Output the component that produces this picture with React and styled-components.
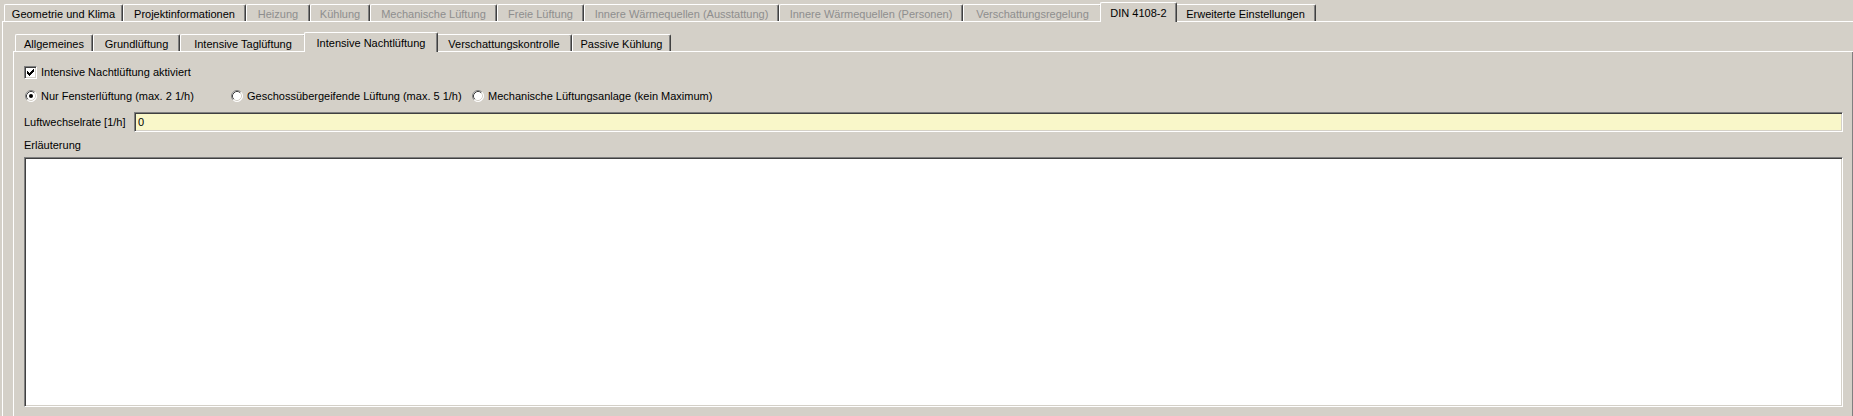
import React from "react";
import styled, { createGlobalStyle, css } from "styled-components";

const GlobalStyle = createGlobalStyle`
  html, body {
    margin: 0;
    padding: 0;
    background: #d4d0c8;
    overflow: hidden;
  }
  body {
    font-family: "Liberation Sans", Arial, sans-serif;
    font-size: 11px;
    color: #000;
  }
`;

const Window = styled.div`
  width: 1853px;
  height: 416px;
  overflow: hidden;
  background: #d4d0c8;
`;

const TabControl = styled.div`
  box-sizing: border-box;
  display: flex;
  flex-direction: column;
  width: ${(p) => p.$width}px;
  margin-left: ${(p) => p.$offset}px;
`;

const TabStrip = styled.div`
  display: flex;
  align-items: flex-end;
  height: ${(p) => p.$height}px;
  padding-left: 2px;
`;

const Tab = styled.div`
  box-sizing: border-box;
  flex: none;
  width: ${(p) => p.$w}px;
  height: 17px;
  padding-top: 2px;
  display: flex;
  align-items: center;
  justify-content: center;
  white-space: nowrap;
  background: #d4d0c8;
  border-top: 1px solid #fff;
  border-left: 1px solid #fff;
  border-right: 1px solid #404040;
  border-radius: 2px 2px 0 0;
  box-shadow: inset -1px 0 0 #808080;
  color: ${(p) => (p.$disabled ? "#8e8e8e" : "#000")};

  ${(p) =>
    p.$active &&
    css`
      width: ${p.$w + 4}px;
      height: 20px;
      padding-top: 1px;
      margin: 0 -2px -1px;
      position: relative;
      z-index: 1;
    `}
`;

const Panel = styled.div`
  box-sizing: border-box;
  display: flex;
  flex-direction: column;
  border-top: 1px solid #fff;
  border-left: 1px solid #fff;
  border-right: 1px solid #404040;
  box-shadow: inset -1px 0 0 #808080;
  padding: ${(p) => p.$pad};
  flex: 1;
`;

const Row = styled.div`
  display: flex;
  align-items: center;
  height: ${(p) => p.$h}px;
  margin-top: ${(p) => p.$mt || 0}px;
`;

const CheckLabel = styled.label`
  display: flex;
  align-items: center;
  gap: 4px;
  white-space: nowrap;
`;

const CheckBoxFrame = styled.span`
  box-sizing: border-box;
  width: 13px;
  height: 13px;
  display: flex;
  align-items: center;
  justify-content: center;
  background: #fff;
  border: 1px solid;
  border-color: #808080 #fff #fff #808080;
  box-shadow: inset 1px 1px 0 #404040, inset -1px -1px 0 #d4d0c8;
`;

const RadioOption = styled.label`
  box-sizing: border-box;
  display: flex;
  align-items: center;
  gap: 4px;
  white-space: nowrap;
  width: ${(p) => (p.$w ? `${p.$w}px` : "auto")};
  padding-left: 1px;
`;

const FieldLabel = styled.span`
  white-space: nowrap;
  width: 110px;
  flex: none;
`;

const sunken = css`
  box-sizing: border-box;
  border: 1px solid;
  border-color: #808080 #fff #fff #808080;
  box-shadow: inset 1px 1px 0 #404040, inset -1px -1px 0 #d4d0c8;
`;

const TextInput = styled.div`
  ${sunken}
  flex: 1;
  height: 20px;
  margin-right: 10px;
  background: #f9f7c9;
  display: flex;
  align-items: center;
  padding-left: 3px;
`;

const NoteArea = styled.div`
  ${sunken}
  height: 250px;
  margin-right: 10px;
  background: #fff;
`;

const CheckMark = () => (
  <svg width="7" height="7" viewBox="0 0 7 7" shapeRendering="crispEdges">
    <path
      fill="#000"
      d="M6 0h1v1h-1zM5 1h2v1h-2zM0 2h1v1h-1zM4 2h3v1h-3zM0 3h2v1h-2zM3 3h3v1h-3zM0 4h5v1h-5zM1 5h3v1h-3zM2 6h1v1h-1z"
    />
  </svg>
);

const RadioDot = ({ checked }) => (
  <svg width="12" height="12" viewBox="0 0 12 12">
    <circle cx="6" cy="6" r="5.5" fill="#fff" />
    <path d="M2.11 9.89A5.5 5.5 0 0 1 9.89 2.11" fill="none" stroke="#808080" />
    <path d="M9.89 2.11A5.5 5.5 0 0 1 2.11 9.89" fill="none" stroke="#fff" />
    <path d="M2.82 9.18A4.5 4.5 0 0 1 9.18 2.82" fill="none" stroke="#404040" />
    <path d="M9.18 2.82A4.5 4.5 0 0 1 2.82 9.18" fill="none" stroke="#d4d0c8" />
    {checked && <circle cx="6" cy="6" r="2" fill="#000" />}
  </svg>
);

const mainTabs = [
  { label: "Geometrie und Klima", w: 119 },
  { label: "Projektinformationen", w: 123 },
  { label: "Heizung", w: 64, disabled: true },
  { label: "Kühlung", w: 60, disabled: true },
  { label: "Mechanische Lüftung", w: 127, disabled: true },
  { label: "Freie Lüftung", w: 87, disabled: true },
  { label: "Innere Wärmequellen (Ausstattung)", w: 195, disabled: true },
  { label: "Innere Wärmequellen (Personen)", w: 184, disabled: true },
  { label: "Verschattungsregelung", w: 139, disabled: true },
  { label: "DIN 4108-2", w: 73, active: true },
  { label: "Erweiterte Einstellungen", w: 141 },
];

const subTabs = [
  { label: "Allgemeines", w: 78 },
  { label: "Grundlüftung", w: 87 },
  { label: "Intensive Taglüftung", w: 126 },
  { label: "Intensive Nachtlüftung", w: 130, active: true },
  { label: "Verschattungskontrolle", w: 136 },
  { label: "Passive Kühlung", w: 99 },
];

const renderTabs = (tabs) =>
  tabs.map((t) => (
    <Tab key={t.label} $w={t.w} $active={t.active} $disabled={t.disabled}>
      {t.label}
    </Tab>
  ));

export default function App() {
  return (
    <>
      <GlobalStyle />
      <Window>
        <TabControl $width={1864} $offset={2}>
          <TabStrip $height={21}>{renderTabs(mainTabs)}</TabStrip>
          <Panel $pad="0 10px 0 10px">
            <TabControl $width={1841} $offset={0}>
              <TabStrip $height={29}>{renderTabs(subTabs)}</TabStrip>
              <Panel $pad="6px 0 10px 10px">
                <Row $h={28}>
                  <CheckLabel>
                    <CheckBoxFrame>
                      <CheckMark />
                    </CheckBoxFrame>
                    Intensive Nachtlüftung aktiviert
                  </CheckLabel>
                </Row>
                <Row $h={20}>
                  <RadioOption $w={206}>
                    <RadioDot checked />
                    Nur Fensterlüftung (max. 2 1/h)
                  </RadioOption>
                  <RadioOption $w={241}>
                    <RadioDot />
                    Geschossübergeifende Lüftung (max. 5 1/h)
                  </RadioOption>
                  <RadioOption>
                    <RadioDot />
                    Mechanische Lüftungsanlage (kein Maximum)
                  </RadioOption>
                </Row>
                <Row $h={20} $mt={6}>
                  <FieldLabel>Luftwechselrate [1/h]</FieldLabel>
                  <TextInput>0</TextInput>
                </Row>
                <Row $h={25}>Erläuterung</Row>
                <NoteArea />
              </Panel>
            </TabControl>
          </Panel>
        </TabControl>
      </Window>
    </>
  );
}
